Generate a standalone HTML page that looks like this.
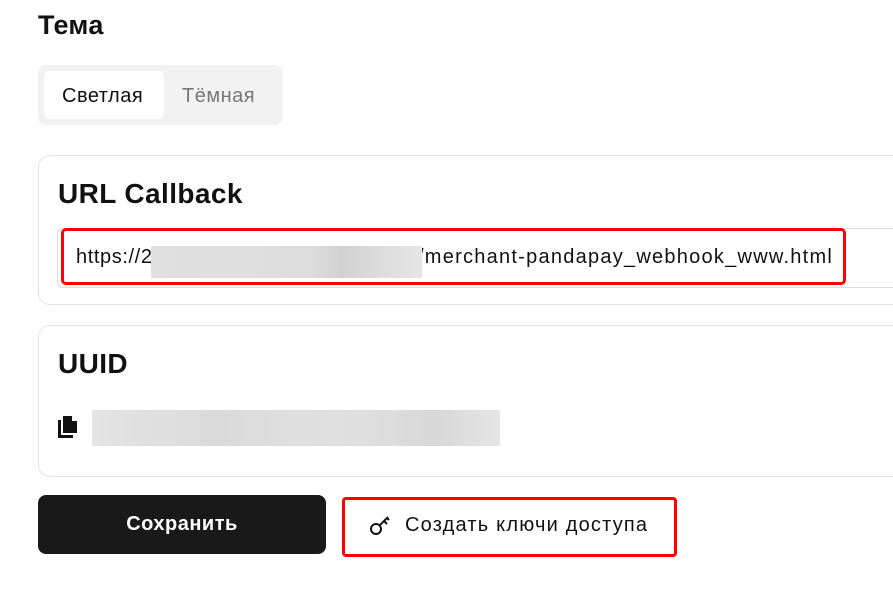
<!DOCTYPE html><html><head><style>
body{margin:0;width:893px;height:604px;background:#fff;font-family:"Liberation Sans","DejaVu Sans",sans-serif;color:#111;position:relative;overflow:hidden}
.a{position:absolute}
</style></head><body>
<div class="a" style="left:38px;top:10px;font-size:27px;font-weight:bold;letter-spacing:0.3px">Тема</div>
<div class="a" style="left:38px;top:65px;width:245px;height:60px;background:#f2f2f2;border-radius:8px"></div>
<div class="a" style="left:44px;top:71px;width:120px;height:48px;background:#fff;border-radius:6px"></div>
<div class="a" style="left:62px;top:85px;font-size:20px;letter-spacing:0.5px">Светлая</div>
<div class="a" style="left:182px;top:85px;font-size:20px;color:#777;letter-spacing:0.5px">Тёмная</div>
<div class="a" style="left:38px;top:155px;width:900px;height:150px;border:1px solid #e4e4e4;border-radius:12px;box-sizing:border-box"></div>
<div class="a" style="left:58px;top:178px;font-size:28px;font-weight:bold;letter-spacing:0.4px">URL Callback</div>
<div class="a" style="left:57px;top:228px;width:900px;height:58px;border:1px solid #ddd;border-radius:6px"></div>
<div class="a" style="left:61px;top:228px;width:785px;height:57px;border:3px solid #f00;border-radius:5px;box-sizing:border-box"></div>
<div class="a" style="left:76px;top:246px;font-size:20px;letter-spacing:0.6px;white-space:nowrap">https://2</div>
<div class="a" style="left:418px;top:246px;font-size:20px;letter-spacing:1.25px;white-space:nowrap">/merchant-pandapay_webhook_www.html</div>
<div class="a" style="left:151px;top:246px;width:271px;height:32px;background:linear-gradient(90deg,#e0e0e0,#dcdcdc 60%,#d2d2d2 70%,#e6e6e6)"></div>
<div class="a" style="left:38px;top:325px;width:900px;height:152px;border:1px solid #e4e4e4;border-radius:12px;box-sizing:border-box"></div>
<div class="a" style="left:58px;top:348px;font-size:28px;font-weight:bold;letter-spacing:0.4px">UUID</div>
<svg class="a" style="left:58px;top:415px" width="22" height="24" viewBox="0 0 22 24"><path d="M0 5h3v15h12v3H0z" fill="#111"/><path d="M5 1h9l5 5v12H5z" fill="#111"/><path d="M14 1v5h5" fill="#fff"/></svg>
<div class="a" style="left:92px;top:410px;width:408px;height:36px;background:linear-gradient(90deg,#e4e4e4,#dadada 30%,#e0e0e0 60%,#d8d8d8 85%,#e6e6e6)"></div>
<div class="a" style="left:38px;top:495px;width:288px;height:59px;background:#191919;border-radius:8px;color:#fff;font-size:20px;font-weight:bold;text-align:center;line-height:59px;letter-spacing:0.5px">Сохранить</div>
<div class="a" style="left:342px;top:497px;width:335px;height:60px;border:3px solid #f00;border-radius:4px;box-sizing:border-box"></div>
<svg class="a" style="left:369px;top:514px" width="24" height="22" viewBox="0 0 24 22"><circle cx="7" cy="15" r="5" fill="none" stroke="#111" stroke-width="2"/><path d="M11 11l8-8M15 7l3 3M18 4l2 2" stroke="#111" stroke-width="2" fill="none"/></svg>
<div class="a" style="left:405px;top:514px;font-size:20px;letter-spacing:1.2px;white-space:nowrap">Создать ключи доступа</div>
</body></html>
